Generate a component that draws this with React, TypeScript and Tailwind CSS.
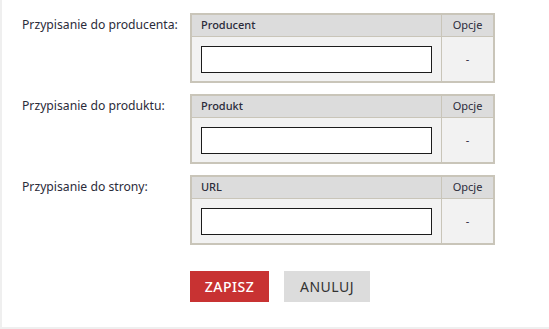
import React from "react";

const rows = [
  { label: "Przypisanie do producenta:", head: "Producent" },
  { label: "Przypisanie do produktu:", head: "Produkt" },
  { label: "Przypisanie do strony:", head: "URL" },
];

export default function App() {
  return (
    <div
      className="h-[329px] w-[549px] bg-white border-l-2 border-b-2 border-[#efefef] text-[#2b2b3a]"
      style={{ fontFamily: "'Noto Sans', 'DejaVu Sans', sans-serif" }}
    >
      <div className="flex flex-col gap-[11px] pt-[13px]">
        {rows.map((r) => (
          <div key={r.head} className="flex">
            <div className="w-[188px] pl-[20px] pt-[3px] text-[12.2px] leading-[18px]">{r.label}</div>
            <div className="w-[305px] border-2 border-[#c9c5b9] bg-[#f2f2f2]">
              <div className="flex h-[22px] bg-[#dcdcdc] border-b border-[#c9c5b9] text-[11px]">
                <div className="flex-1 pl-[9px] flex items-center font-medium">{r.head}</div>
                <div className="w-[52px] border-l border-[#c9c5b9] flex items-center justify-center">Opcje</div>
              </div>
              <div className="flex h-[44px]">
                <div className="flex-1 pl-[9px] pt-[9px]">
                  <input className="block w-[231px] h-[27px] bg-white border border-[#1c1c1c] outline-none" />
                </div>
                <div className="w-[52px] border-l border-[#c9c5b9] flex items-center justify-center text-[11px]">-</div>
              </div>
            </div>
          </div>
        ))}
      </div>
      <div className="flex gap-[15px] pl-[188px] pt-[26px]">
        <button className="h-[31px] w-[79px] bg-[#c83232] text-white text-[14px] font-medium tracking-[0.5px]">ZAPISZ</button>
        <button className="h-[31px] w-[86px] bg-[#dcdcdc] text-[#333] text-[14px] tracking-[0.5px]">ANULUJ</button>
      </div>
    </div>
  );
}
